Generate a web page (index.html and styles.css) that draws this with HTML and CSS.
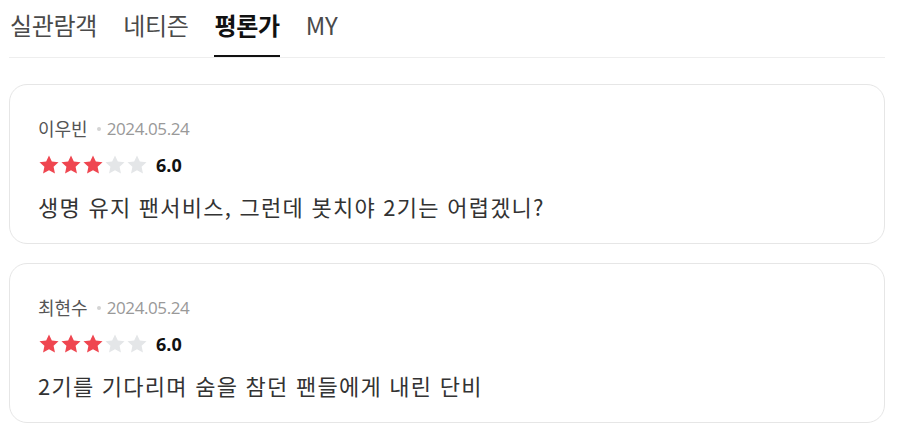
FILE: index.html
```html
<!DOCTYPE html>
<html lang="ko">
<head>
<meta charset="utf-8">
<link rel="stylesheet" href="styles.css">
</head>
<body>
<div class="page">
  <nav class="tabs">
    <a class="tab">실관람객</a>
    <a class="tab">네티즌</a>
    <a class="tab active">평론가</a>
    <a class="tab">MY</a>
  </nav>
  <section class="list">
    <article class="card">
      <div class="meta"><span class="name">이우빈</span><span class="dot"></span><span class="date">2024.05.24</span></div>
      <div class="rating">
        <span class="stars">
          <svg class="star on" viewBox="0 0 24 24"><path d="M12 1.5l3.1 6.7 7.3.8-5.4 5 1.5 7.3L12 17.6l-6.5 3.7 1.5-7.3-5.4-5 7.3-.8z"/></svg><svg class="star on" viewBox="0 0 24 24"><path d="M12 1.5l3.1 6.7 7.3.8-5.4 5 1.5 7.3L12 17.6l-6.5 3.7 1.5-7.3-5.4-5 7.3-.8z"/></svg><svg class="star on" viewBox="0 0 24 24"><path d="M12 1.5l3.1 6.7 7.3.8-5.4 5 1.5 7.3L12 17.6l-6.5 3.7 1.5-7.3-5.4-5 7.3-.8z"/></svg><svg class="star" viewBox="0 0 24 24"><path d="M12 1.5l3.1 6.7 7.3.8-5.4 5 1.5 7.3L12 17.6l-6.5 3.7 1.5-7.3-5.4-5 7.3-.8z"/></svg><svg class="star" viewBox="0 0 24 24"><path d="M12 1.5l3.1 6.7 7.3.8-5.4 5 1.5 7.3L12 17.6l-6.5 3.7 1.5-7.3-5.4-5 7.3-.8z"/></svg>
        </span>
        <span class="score">6.0</span>
      </div>
      <p class="text">생명 유지 팬서비스, 그런데 봇치야 2기는 어렵겠니?</p>
    </article>
    <article class="card">
      <div class="meta"><span class="name">최현수</span><span class="dot"></span><span class="date">2024.05.24</span></div>
      <div class="rating">
        <span class="stars">
          <svg class="star on" viewBox="0 0 24 24"><path d="M12 1.5l3.1 6.7 7.3.8-5.4 5 1.5 7.3L12 17.6l-6.5 3.7 1.5-7.3-5.4-5 7.3-.8z"/></svg><svg class="star on" viewBox="0 0 24 24"><path d="M12 1.5l3.1 6.7 7.3.8-5.4 5 1.5 7.3L12 17.6l-6.5 3.7 1.5-7.3-5.4-5 7.3-.8z"/></svg><svg class="star on" viewBox="0 0 24 24"><path d="M12 1.5l3.1 6.7 7.3.8-5.4 5 1.5 7.3L12 17.6l-6.5 3.7 1.5-7.3-5.4-5 7.3-.8z"/></svg><svg class="star" viewBox="0 0 24 24"><path d="M12 1.5l3.1 6.7 7.3.8-5.4 5 1.5 7.3L12 17.6l-6.5 3.7 1.5-7.3-5.4-5 7.3-.8z"/></svg><svg class="star" viewBox="0 0 24 24"><path d="M12 1.5l3.1 6.7 7.3.8-5.4 5 1.5 7.3L12 17.6l-6.5 3.7 1.5-7.3-5.4-5 7.3-.8z"/></svg>
        </span>
        <span class="score">6.0</span>
      </div>
      <p class="text">2기를 기다리며 숨을 참던 팬들에게 내린 단비</p>
    </article>
  </section>
</div>
</body>
</html>
```
FILE: styles.css
```css
html, body {
  margin: 0;
  padding: 0;
  background: #fff;
}
body {
  font-family: "Noto Sans CJK KR", "Noto Sans", sans-serif;
  color: #333;
}
.page {
  width: 876px;
  margin-left: 9px;
}
.tabs {
  display: flex;
  gap: 26px;
  height: 57px;
  border-bottom: 1px solid #eee;
  padding-left: 1px;
}
.tab {
  display: block;
  font-size: 24px;
  line-height: 34px;
  padding-top: 8px;
  height: 46px;
  color: #4a4a4a;
  letter-spacing: -0.3px;
}
.tab.active {
  color: #111;
  font-weight: 700;
  border-bottom: 2px solid #111;
  height: 47px;
}
.list {
  display: flex;
  flex-direction: column;
  gap: 19px;
  margin-top: 26px;
}
.card {
  border: 1px solid #e6e6e6;
  border-radius: 18px;
  padding: 31px 28px 22px;
}
.meta {
  display: flex;
  align-items: center;
  height: 24px;
}
.name {
  color: #555;
  font-size: 18px;
}
.dot {
  width: 4px;
  height: 4px;
  border-radius: 50%;
  background: #d4d4d4;
  margin: 2px 6px 0 9px;
}
.date {
  color: #999;
  font-family: "Open Sans", "Noto Sans", sans-serif;
  font-size: 17px;
  letter-spacing: -0.4px;
}
.rating {
  display: flex;
  align-items: center;
  height: 24px;
  margin-top: 13px;
}
.stars {
  display: flex;
  height: 22px;
}
.star {
  width: 22px;
  height: 22px;
  fill: #e4e6e8;
}
.star.on {
  fill: #ef4650;
}
.score {
  margin-left: 8px;
  font-family: "Open Sans", "Noto Sans", sans-serif;
  font-weight: 700;
  font-size: 18px;
  color: #111;
}
.text {
  margin: 14px 0 0;
  font-size: 22px;
  line-height: 30px;
  letter-spacing: 1.25px;
  color: #333;
}
```
